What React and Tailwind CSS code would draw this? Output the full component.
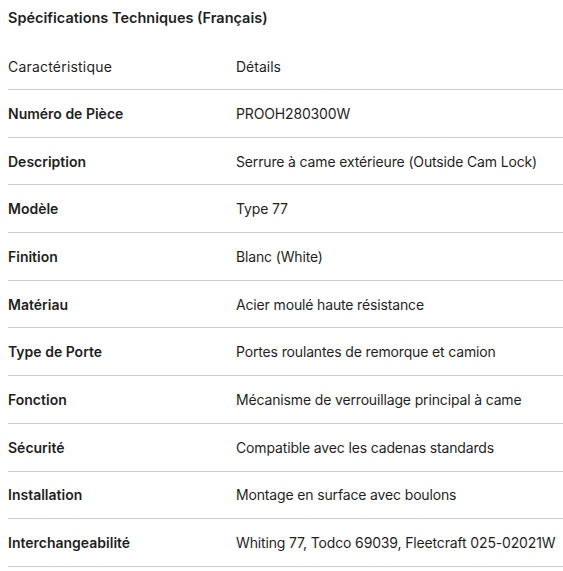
const rows = [
  ["Numéro de Pièce", "PROOH280300W"],
  ["Description", "Serrure à came extérieure (Outside Cam Lock)"],
  ["Modèle", "Type 77"],
  ["Finition", "Blanc (White)"],
  ["Matériau", "Acier moulé haute résistance"],
  ["Type de Porte", "Portes roulantes de remorque et camion"],
  ["Fonction", "Mécanisme de verrouillage principal à came"],
  ["Sécurité", "Compatible avec les cadenas standards"],
  ["Installation", "Montage en surface avec boulons"],
  ["Interchangeabilité", "Whiting 77, Todco 69039, Fleetcraft 025-02021W"],
];

export default function App() {
  return (
    <div className="w-[563px] h-[571px] overflow-hidden bg-white pl-2 text-[14px] text-[#1f1f1f] font-['Inter',sans-serif]">
      <h2 className="h-[43px] pt-[7px] text-[14.5px] leading-[22px] font-semibold">Spécifications Techniques (Français)</h2>
      <div className="flex h-[47px] items-center border-b border-[#cccccc]">
        <div className="w-[228px] shrink-0 tracking-[0.2px]">Caractéristique</div>
        <div>Détails</div>
      </div>
      {rows.map(([k, v]) => (
        <div key={k} className="flex h-[47.7px] items-center border-b border-[#cccccc]">
          <div className="w-[228px] shrink-0 font-semibold">{k}</div>
          <div className="whitespace-nowrap tracking-[-0.15px]">{v}</div>
        </div>
      ))}
    </div>
  );
}
